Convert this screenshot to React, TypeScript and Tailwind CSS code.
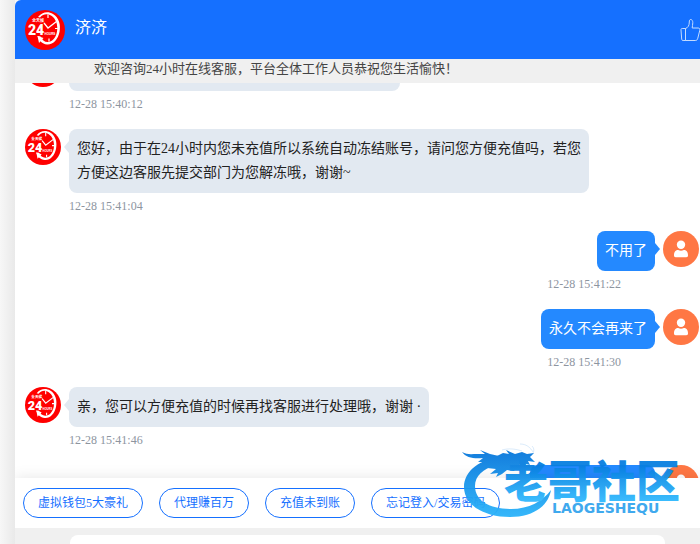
interface Message {
  id: number
  from: "agent" | "visitor"
  text: string
  time: string
  bubble?: string
}

const messages: Message[] = [
  { id: 1, from: "agent", text: "", time: "12-28 15:40:12", bubble: "w-[331px]" },
  {
    id: 2,
    from: "agent",
    text: "您好，由于在24小时内您未充值所以系统自动冻结账号，请问您方便充值吗，若您方便这边客服先提交部门为您解冻哦，谢谢~",
    time: "12-28 15:41:04",
  },
  { id: 3, from: "visitor", text: "不用了", time: "12-28 15:41:22" },
  { id: 4, from: "visitor", text: "永久不会再来了", time: "12-28 15:41:30" },
  { id: 5, from: "agent", text: "亲，您可以方便充值的时候再找客服进行处理哦，谢谢 ·", time: "12-28 15:41:46" },
  { id: 6, from: "visitor", text: "", time: "", bubble: "w-[125px]" },
]

const quickReplies = ["虚拟钱包5大豪礼", "代理赚百万", "充值未到账", "忘记登入/交易密码"]

function AgentAvatar({ className, labelled = true }: { className: string; labelled?: boolean }) {
  return (
    <svg viewBox="0 0 40 40" className={`shrink-0 ${className}`} aria-hidden="true">
      <circle cx="20" cy="20" r="20" fill="#ff0000" />
      {/* dial, thicker on the right */}
      <path
        d="M13 7C17 2 23 1 28 4c6 3.600 8 11 6.500 18C33 29.500 28 35 22 34.500c-5-.5-8-4-9.500-8.500l3 .5c1.500 3.500 4 5.500 7 5.500 5 0 8.500-4.500 9.500-10.500C33 15 31 8.500 26 5.500c-4-2.300-8-1.500-11 2z"
        fill="#fff"
      />
      <path d="M12.500 26l6 2-4.500 5z" fill="#fff" />
      <path d="M19 13l4 5 8.500-6.500" fill="none" stroke="#fff" strokeWidth="1.300" />
      <path d="M23 4.500v3.500M30 18.500h3.500M24 28.500v3" fill="none" stroke="#fff" strokeWidth="1.200" />
      {labelled && (
        <>
          <text x="7" y="12" fontSize="4" fontWeight="700" fill="#fff" fontFamily="Noto Sans CJK SC, sans-serif">
            全天候
          </text>
          <text x="3" y="25" fontSize="14" fontWeight="900" fill="#fff" fontFamily="Roboto, sans-serif">
            24
          </text>
          <text x="19.500" y="25" fontSize="3" fontWeight="700" fill="#fff" fontFamily="Liberation Sans, sans-serif">
            HOURS
          </text>
        </>
      )}
    </svg>
  )
}

function VisitorAvatar() {
  return (
    <svg viewBox="0 0 36 36" className="size-9 shrink-0" aria-hidden="true">
      <circle cx="18" cy="18" r="18" fill="#ff7744" />
      <circle cx="18" cy="13.800" r="4.200" fill="#fff" />
      <path
        d="M11 24.500c0-4 1.800-5.500 4.200-5.500 1.800 1 3.800 1 5.600 0 2.400 0 4.200 1.500 4.200 5.500 0 1.200-.6 1.700-1.700 1.700H12.700c-1.100 0-1.700-.5-1.700-1.700z"
        fill="#fff"
      />
    </svg>
  )
}

function LikeIcon() {
  return (
    <svg viewBox="0 0 22 24" className="h-6 w-[22px]" fill="none" stroke="#c3dbff" aria-hidden="true">
      <path d="M5.500 10.500H2.200c-.9 0-1.300.5-1.200 1.300l.7 9.500c.1.900.6 1.200 1.400 1.200h2.400z" />
      <path d="M5.500 10.500c2.500-.8 3.800-3 3.800-6.500 0-1.600.4-2.500 1.300-2.500 1.400 0 2.200 1.300 2.200 3.200 0 2.200-.6 3.500-.6 5.300h5.900c1.400 0 2 .9 1.700 2.200l-2 8c-.3 1.500-1 2.300-2.500 2.300H5.500z" />
    </svg>
  )
}

function ChatMessage({ message }: { message: Message }) {
  const isAgent = message.from === "agent"

  return (
    <li className={`flex shrink-0 items-start gap-2 ${isAgent ? "" : "flex-row-reverse"}`}>
      {isAgent ? <AgentAvatar className="size-9" labelled={message.text !== ""} /> : <VisitorAvatar />}
      <div className={`flex flex-col ${isAgent ? "items-start" : "items-end"}`}>
        <div
          className={`relative min-h-10 max-w-[520px] rounded-lg p-2 text-sm leading-6 ${message.bubble ?? ""} ${
            isAgent ? "bg-[#e2e9f1] text-[#222222]" : "bg-[#2489ff] text-white"
          }`}
        >
          <span
            className={`absolute top-3 border-y-6 border-y-transparent ${
              isAgent ? "right-full border-r-5 border-r-[#e2e9f1]" : "left-full border-l-5 border-l-[#2489ff]"
            }`}
          />
          {message.text}
        </div>
        <time className={`mt-1 mb-4 h-[18px] text-xs leading-[18px] text-[#8d959f] ${isAgent ? "" : "mr-[34px]"}`}>
          {message.time}
        </time>
      </div>
    </li>
  )
}

function Watermark() {
  return (
    <svg
      viewBox="0 0 240 80"
      className="pointer-events-none absolute right-0 bottom-6 h-20 w-60 opacity-95"
      aria-hidden="true"
    >
      <defs>
        <linearGradient id="ring" gradientUnits="userSpaceOnUse" x1="0" y1="12" x2="0" y2="78">
          <stop offset="0" stopColor="#0878dc" />
          <stop offset="1" stopColor="#2cb5fb" />
        </linearGradient>
        <linearGradient id="letters" gradientUnits="userSpaceOnUse" x1="0" y1="26" x2="0" y2="60">
          <stop offset="0" stopColor="#087fe0" />
          <stop offset="1" stopColor="#30b8fd" />
        </linearGradient>
      </defs>
      <g fill="url(#ring)">
        {/* body of the dragon */}
        <path d="M44 17C20 18 4 31 4 47c0 18 20 30 46 30 22 0 38-10 41-27-8 11-22 19-40 19-21 0-36-8-36-23 0-10 8-17 21-21l6 1 4 3 5-4z" />
        {/* head, mane and claws */}
        <path d="M35 17l8-4 6 1-3-4 9 4 7-2 5 2 7-1-4 4 5 5-7-1 2 4-8-2-4 3-4 5-7-1-5 4-6 3 2-4-8 1 6-5-9-1-5-4z" />
        {/* tail */}
        <path d="M2 12c5 3 10 2 15 2l8 0-5-4 10 4 9 2-4 4-9 2-8 0 5-4c-8 1-17 0-21-6z" />
      </g>
      <path
        d="M42 10c7-2 14-1 20 1M60 4c6 0 10 3 13 8M72 6c3 3 2 7-1 10"
        fill="none"
        stroke="#0878dc"
        strokeOpacity="0.15"
      />
      <text x="44" y="58" fontSize="44" fontWeight="900" fill="url(#letters)" fontFamily="Noto Sans CJK SC, sans-serif">
        老哥社区
      </text>
      <text x="92" y="73" fontSize="14" fill="#35a5ee" fontWeight="700" fontFamily="DejaVu Sans, sans-serif">
        LAOGESHEQU
      </text>
    </svg>
  )
}

export default function App() {
  return (
    <div className="relative flex h-screen overflow-hidden bg-[#f6f6f6] font-['Liberation_Serif','Noto_Sans_CJK_SC',serif]">
      <div className="w-[15px] shrink-0 bg-linear-to-r from-[#f7f7f7] to-[#e9e9e9]" />

      <main className="flex min-w-0 flex-1 flex-col overflow-hidden rounded-tl-md bg-white">
        <header className="flex h-[59px] shrink-0 items-center bg-[#1570ff] pl-2.5 text-white">
          <AgentAvatar className="size-10" />
          <h1 className="ml-2.5 flex-1 pb-1 text-base leading-6">济济</h1>
          <button type="button" aria-label="点赞" className="-mr-0.5">
            <LikeIcon />
          </button>
        </header>

        <p className="h-6 shrink-0 truncate bg-[#f0f0f0] pl-[79px] text-[13px] leading-5 text-[#444444]">
          欢迎咨询24小时在线客服，平台全体工作人员恭祝您生活愉快！
        </p>

        <div className="relative min-h-0 flex-1 overflow-hidden">
          <ul className="-mt-8 flex flex-col pr-px pl-2.5">
            {messages.map((message) => (
              <ChatMessage key={message.id} message={message} />
            ))}
          </ul>
        </div>

        <nav className="relative flex h-[50px] shrink-0 items-center gap-4 bg-white px-2 shadow-[0_0_14px_rgba(0,0,0,0.1)]">
          {quickReplies.map((reply) => (
            <button
              key={reply}
              type="button"
              className="h-[30px] rounded-full border border-[#1570ff] px-3.5 text-xs whitespace-nowrap text-[#1570ff]"
            >
              {reply}
            </button>
          ))}
        </nav>

        <footer className="relative h-4 shrink-0 overflow-hidden bg-[#f0f0f0] pt-[7px] pr-[35px] pl-[55px]">
          <textarea aria-label="消息" className="block h-9 w-full resize-none rounded-lg bg-white outline-none" />
        </footer>
      </main>

      <Watermark />
    </div>
  )
}
